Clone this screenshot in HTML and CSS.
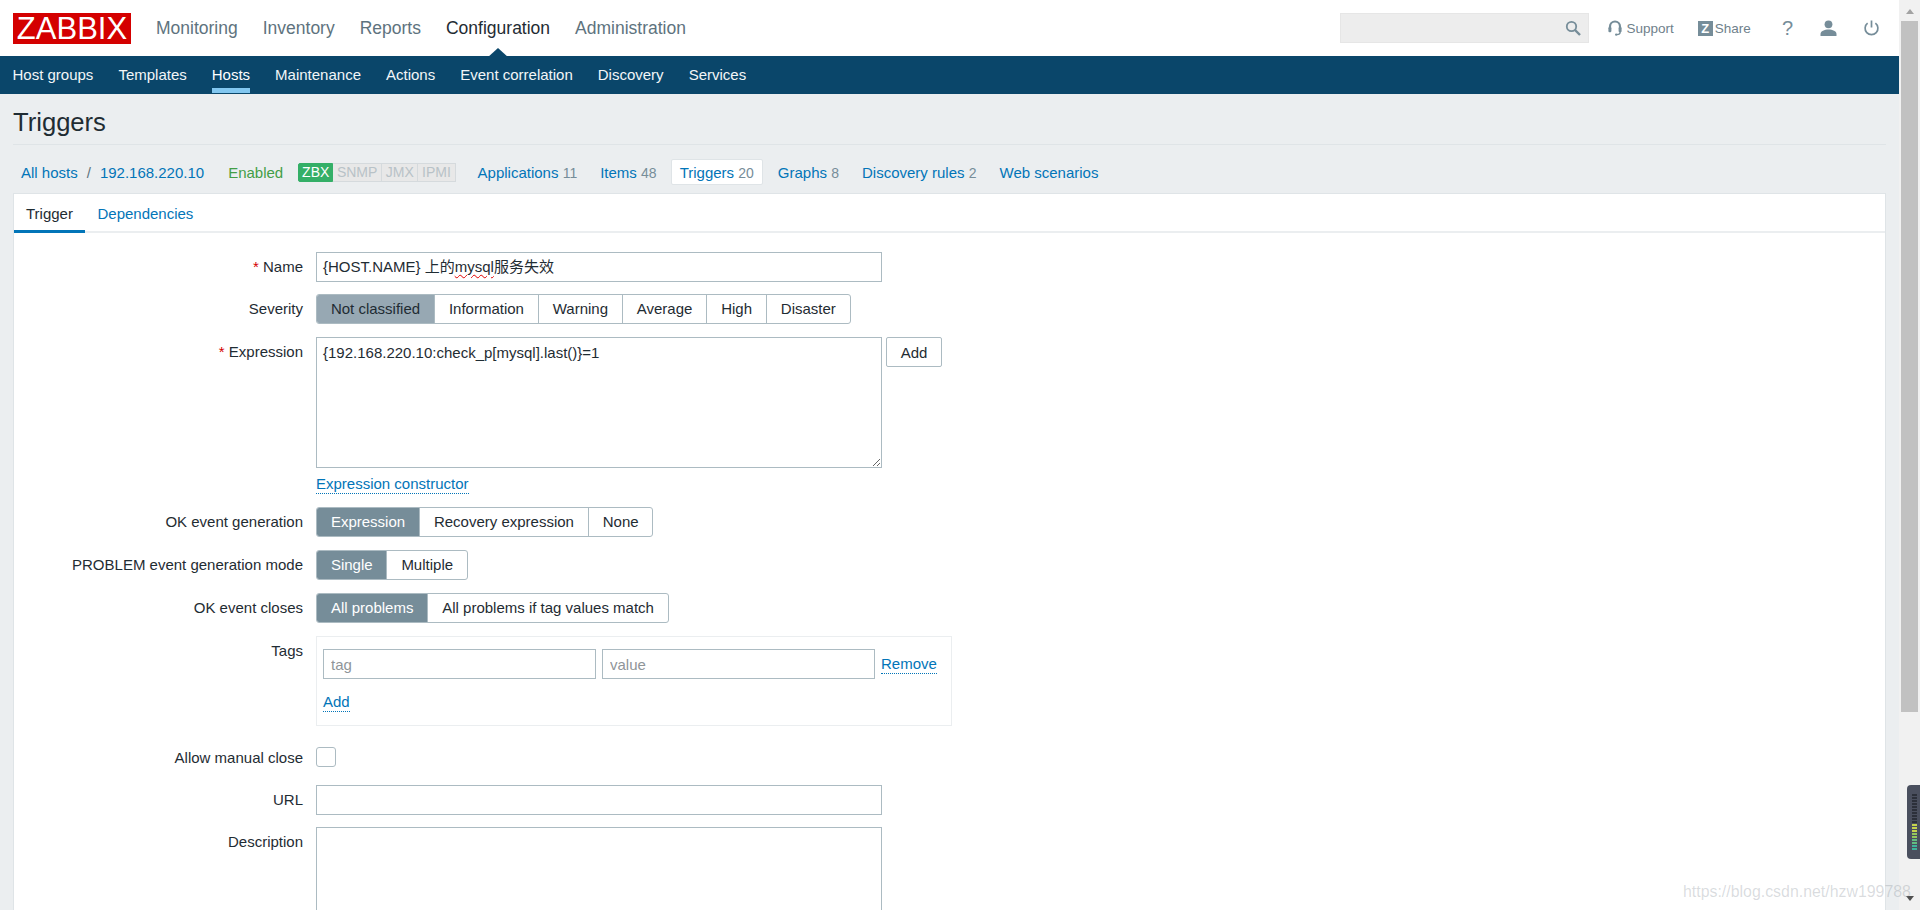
FILE: index.html
```html
<!DOCTYPE html>
<html lang="en">

<head>
    <meta charset="UTF-8">
    <meta name="viewport" content="width=device-width, initial-scale=1.0">
    <title>Configuration of triggers</title>
    <link rel="stylesheet" href="styles.css">
</head>

<body>
    <div class="page">
        <header class="top">
            <a class="logo">ZABBIX</a>
            <ul class="main-nav">
                <li>Monitoring</li>
                <li>Inventory</li>
                <li>Reports</li>
                <li class="active">Configuration</li>
                <li>Administration</li>
            </ul>
            <div class="search">
                <svg width="16" height="16" viewBox="0 0 16 16" fill="none" stroke="#768d99">
                    <circle cx="6.5" cy="6.5" r="4.7" stroke-width="1.8" />
                    <path d="M10 10l5 5" stroke-width="2.4" />
                </svg>
            </div>
            <a class="tool support">
                <svg width="14" height="16" viewBox="0 0 14 16" fill="none">
                    <path d="M2 8V6.5a5 5 0 0 1 10 0V8" stroke="#768d99" stroke-width="2.2" />
                    <rect x="0.4" y="7" width="3" height="5.2" rx="1.2" fill="#768d99" />
                    <rect x="10.6" y="7" width="3" height="5.2" rx="1.2" fill="#768d99" />
                    <path d="M12.2 12c0 1.8-1.6 2.6-3.4 2.6" stroke="#768d99" stroke-width="1.3" />
                    <circle cx="8.2" cy="14.6" r="1.2" fill="#768d99" />
                </svg>
                Support
            </a>
            <a class="tool share"><span class="z-box">Z</span>Share</a>
            <a class="tool help">?</a>
            <a class="tool user">
                <svg width="17" height="16" viewBox="0 0 17 16" fill="#768d99">
                    <circle cx="8.5" cy="4.3" r="3.9" />
                    <path d="M0.5 16v-2c0-3 4-4.6 8-4.6s8 1.6 8 4.6v2z" />
                </svg>
            </a>
            <a class="tool power">
                <svg width="15" height="16" viewBox="0 0 15 16" fill="none" stroke="#768d99" stroke-width="1.7">
                    <path d="M3.6 3.2a6.4 6.4 0 1 0 7.8 0" />
                    <path d="M7.5 0.5v7" />
                </svg>
            </a>
        </header>

        <ul class="sub-nav">
            <li>Host groups</li>
            <li>Templates</li>
            <li class="active">Hosts</li>
            <li>Maintenance</li>
            <li>Actions</li>
            <li>Event correlation</li>
            <li>Discovery</li>
            <li>Services</li>
        </ul>

        <main class="content">
            <h1 class="title">Triggers</h1>

            <ul class="host-nav">
                <li class="crumbs"><a>All hosts</a><span class="slash">/</span><a>192.168.220.10</a></li>
                <li class="enabled">Enabled</li>
                <li class="badges">
                    <span class="on">ZBX</span><span>SNMP</span><span>JMX</span><span>IPMI</span>
                </li>
                <li class="link apps"><a>Applications</a> <em>11</em></li>
                <li class="link"><a>Items</a> <em>48</em></li>
                <li class="link current"><a>Triggers</a> <em>20</em></li>
                <li class="link"><a>Graphs</a> <em>8</em></li>
                <li class="link"><a>Discovery rules</a> <em>2</em></li>
                <li class="link"><a>Web scenarios</a></li>
            </ul>

            <section class="panel">
                <ul class="tabs">
                    <li class="active">Trigger</li>
                    <li><a>Dependencies</a></li>
                </ul>

                <form class="form">
                    <div class="row">
                        <label class="lbl"><i>*</i> Name</label>
                        <div class="text-box long">{HOST.NAME} 上的<span class="typo">mysql</span>服务失效</div>
                    </div>
                    <div class="row gap12">
                        <label class="lbl">Severity</label>
                        <ul class="seg">
                            <li class="soft">Not classified</li>
                            <li>Information</li>
                            <li>Warning</li>
                            <li>Average</li>
                            <li>High</li>
                            <li>Disaster</li>
                        </ul>
                    </div>
                    <div class="row">
                        <label class="lbl"><i>*</i> Expression</label>
                        <div class="expr">
                            <textarea class="area long">{192.168.220.10:check_p[mysql].last()}=1</textarea>
                            <button type="button" class="btn">Add</button>
                        </div>
                    </div>
                    <div class="row constructor">
                        <span class="lbl"></span>
                        <a class="dotted">Expression constructor</a>
                    </div>
                    <div class="row">
                        <label class="lbl">OK event generation</label>
                        <ul class="seg">
                            <li class="sel">Expression</li>
                            <li>Recovery expression</li>
                            <li>None</li>
                        </ul>
                    </div>
                    <div class="row">
                        <label class="lbl">PROBLEM event generation mode</label>
                        <ul class="seg">
                            <li class="sel">Single</li>
                            <li>Multiple</li>
                        </ul>
                    </div>
                    <div class="row">
                        <label class="lbl">OK event closes</label>
                        <ul class="seg">
                            <li class="sel">All problems</li>
                            <li>All problems if tag values match</li>
                        </ul>
                    </div>
                    <div class="row">
                        <label class="lbl">Tags</label>
                        <div class="tags">
                            <div class="tag-row">
                                <input class="field tag-field" placeholder="tag">
                                <input class="field tag-field" placeholder="value">
                                <a class="dotted">Remove</a>
                            </div>
                            <a class="dotted tag-add">Add</a>
                        </div>
                    </div>
                    <div class="row manual">
                        <label class="lbl">Allow manual close</label>
                        <span class="check"></span>
                    </div>
                    <div class="row url">
                        <label class="lbl">URL</label>
                        <input class="field long">
                    </div>
                    <div class="row gap12">
                        <label class="lbl">Description</label>
                        <textarea class="area long desc"></textarea>
                    </div>
                </form>
            </section>
        </main>
    </div>

    <aside class="scrollbar">
        <span class="arrow up"></span>
        <span class="thumb"></span>
        <span class="arrow down"></span>
    </aside>

    <div class="meter">
        <span class="off"></span><span class="off"></span><span class="off"></span><span class="off"></span>
        <span class="off"></span><span class="off"></span><span class="off"></span><span class="off"></span>
        <span class="off"></span><span class="off"></span>
        <span class="c1"></span><span class="c1"></span><span class="c1"></span><span class="c2"></span><span class="c2"></span>
        <span class="c3"></span><span class="c3"></span><span class="c4"></span><span class="c4"></span>
    </div>
    <div class="watermark">https://blog.csdn.net/hzw199788</div>
</body>

</html>
```

FILE: styles.css
```css
* {
    padding: 0;
    margin: 0;
    box-sizing: border-box;
    list-style: none;
}

html,
body {
    height: 910px;
    overflow: hidden;
}

body {
    display: flex;
    background-color: #ebeef0;
    color: #1f2c33;
    font: 15px "Liberation Sans", "Noto Sans CJK SC", sans-serif;
}

a {
    color: #0275b8;
}

.page {
    flex: 1;
    min-width: 0;
    height: 910px;
    overflow: hidden;
}

/* top bar */
.top {
    display: flex;
    align-items: center;
    height: 56px;
    padding-left: 13px;
    background-color: #fff;
}

.logo {
    width: 118px;
    height: 31px;
    background-color: #d40000;
    color: #fff;
    font-size: 31px;
    line-height: 32px;
    text-align: center;
}

.main-nav {
    display: flex;
    gap: 25px;
    margin-left: 25px;
    font-size: 17.5px;
    color: #5e737e;
}

.main-nav .active {
    position: relative;
    color: #1f2c33;
}

.main-nav .active::after {
    content: '';
    position: absolute;
    left: 50%;
    bottom: -19px;
    margin-left: -11px;
    border-left: 11px solid transparent;
    border-right: 11px solid transparent;
    border-bottom: 10px solid #0a466a;
}

.search {
    display: flex;
    align-items: center;
    justify-content: flex-end;
    width: 249px;
    height: 30px;
    margin-left: auto;
    padding-right: 7px;
    background-color: #ededed;
    border: 1px solid #e6e6e6;
}

.tool {
    display: flex;
    align-items: center;
    color: #6f818b;
    font-size: 13.5px;
}

.support {
    gap: 5px;
    margin-left: 19px;
}

.share {
    margin-left: 24px;
}

.z-box {
    width: 15px;
    height: 15px;
    margin-right: 2px;
    background-color: #768d99;
    color: #fff;
    font-size: 13px;
    font-weight: bold;
    line-height: 15px;
    text-align: center;
}

.help {
    margin-left: 31px;
    font-size: 20px;
    color: #768d99;
}

.user {
    margin-left: 27px;
}

.power {
    margin-left: 27px;
    margin-right: 20px;
}

/* second level menu */
.sub-nav {
    display: flex;
    gap: 25px;
    height: 38px;
    padding-left: 12.5px;
    background-color: #0a466a;
    color: #f2f6f8;
}

.sub-nav li {
    height: 37px;
    line-height: 37px;
}

.sub-nav .active {
    color: #fff;
    border-bottom: 5px solid #82c7f0;
}

/* page body */
.content {
    padding: 0 13px;
}

.title {
    height: 51px;
    padding-top: 9px;
    font-size: 25.6px;
    font-weight: normal;
    line-height: 38px;
    border-bottom: 1px solid #dfe4e7;
}

.host-nav {
    display: flex;
    align-items: center;
    height: 26px;
    margin-top: 14px;
    padding-left: 8px;
}

.crumbs .slash {
    margin: 0 9px;
    color: #5e737e;
}

.enabled {
    margin-left: 24px;
    color: #429e47;
}

.badges {
    display: flex;
    height: 19px;
    margin-left: 15px;
    border-radius: 2px;
    font-size: 14px;
    line-height: 17px;
    color: #b8c2c7;
}

.badges span {
    padding: 0 3.7px;
    background-color: #e8e8e8;
    border: 1px solid #d5dadd;
    border-left: 0;
}

.badges .on {
    width: 35px;
    padding: 0;
    background-color: #34af67;
    border: 1px solid #34af67;
    border-radius: 2px 0 0 2px;
    color: #fff;
    text-align: center;
}

.link {
    margin-left: 23px;
    white-space: nowrap;
}

.link em {
    font-style: normal;
    font-size: 14px;
    color: #768d99;
}

.link.apps {
    margin-left: 22px;
}

.link.current {
    height: 26px;
    margin-left: 14px;
    margin-right: -8px;
    padding: 0 8px;
    line-height: 25px;
    background-color: #fff;
    border: 1px solid #dfe4e7;
    border-radius: 2px;
}

.panel {
    height: 800px;
    margin-top: 8px;
    background-color: #fff;
    border: 1px solid #dfe4e7;
}

.tabs {
    display: flex;
    height: 39px;
    border-bottom: 2px solid #ebeef0;
}

.tabs li {
    height: 39px;
    padding: 0 12.5px 0 12px;
    line-height: 39px;
}

.tabs .active {
    border-bottom: 3px solid #0275b8;
}

/* form rows */
.form {
    padding-top: 19px;
}

.row {
    display: flex;
    margin-top: 13px;
}

.row:first-child {
    margin-top: 0;
}

.row.gap12 {
    margin-top: 12px;
}

.lbl {
    flex: none;
    width: 289px;
    margin-right: 13px;
    padding-top: 6px;
    text-align: right;
    white-space: nowrap;
}

.lbl i {
    font-style: normal;
    color: #d40000;
}

.long {
    width: 566px;
}

.text-box,
.field,
.area {
    height: 30px;
    padding: 0 7px;
    background-color: #fff;
    border: 1px solid #acbbc2;
    color: #1f2c33;
    font: 15px "Liberation Sans", "Noto Sans CJK SC", sans-serif;
    line-height: 28px;
}

.text-box,
.area {
    padding-left: 6px;
}

.field::placeholder {
    color: #8f9599;
}

.typo {
    text-decoration: underline wavy #e00000 1px;
    text-underline-offset: 2px;
}

.area {
    display: block;
    height: 131px;
    padding-top: 1px;
}

.desc {
    height: 200px;
}

.expr {
    display: flex;
    align-items: flex-start;
    gap: 4px;
}

.btn {
    width: 56px;
    height: 30px;
    background-color: #fff;
    border: 1px solid #acbbc2;
    border-radius: 2px;
    color: #1f2c33;
    font: 15px "Liberation Sans", sans-serif;
}

.seg {
    display: flex;
    height: 30px;
    border: 1px solid #acbbc2;
    border-radius: 3px;
    line-height: 28px;
    white-space: nowrap;
}

.seg li {
    padding: 0 13.9px;
    border-left: 1px solid #acbbc2;
}

.seg li:first-child {
    border-left: 0;
    border-radius: 2px 0 0 2px;
}

.seg .sel {
    background-color: #768d99;
    color: #fff;
}

.seg .soft {
    background-color: #97a8b3;
}

.constructor {
    height: 19px;
    margin-top: 7px;
}

.constructor .lbl {
    padding: 0;
}

.dotted {
    height: 19px;
    line-height: 17px;
    border-bottom: 1px dotted #0275b8;
}

.tags {
    width: 636px;
    height: 90px;
    padding: 12px 6px 0;
    border: 1px solid #ebeef0;
}

.tag-row {
    display: flex;
    align-items: center;
    gap: 6px;
}

.tag-field {
    width: 273px;
}

.tag-add {
    display: inline-block;
    margin-top: 14px;
}

.manual {
    height: 20px;
    margin-top: 21px;
}

.manual .lbl {
    padding-top: 2px;
}

.check {
    width: 20px;
    height: 20px;
    border: 1px solid #acbbc2;
    border-radius: 3px;
}

.row.url {
    margin-top: 18px;
}

/* browser scrollbar, it is part of the screenshot */
.scrollbar {
    flex: none;
    display: flex;
    flex-direction: column;
    align-items: center;
    width: 21px;
    height: 910px;
    background-color: #f1f1f1;
}

.arrow {
    flex: none;
    width: 0;
    height: 0;
    border-left: 4px solid transparent;
    border-right: 4px solid transparent;
}

.arrow.up {
    margin: 9px 0 7px;
    border-bottom: 5px solid #a3a3a3;
}

.arrow.down {
    margin-top: auto;
    margin-bottom: 9px;
    border-top: 5px solid #505050;
}

.thumb {
    width: 17px;
    height: 691px;
    background-color: #c1c1c1;
}

/* floating things over the page */
.meter {
    position: absolute;
    top: 785px;
    right: 0;
    display: flex;
    flex-direction: column;
    gap: 1px;
    width: 13px;
    height: 74px;
    padding: 9px 0 0 5px;
    background-color: #4a4f5e;
    border-radius: 4px 0 0 4px;
}

.meter span {
    width: 5px;
    height: 2px;
}

.meter .off {
    background-color: #2c303a;
}

.meter .c1 {
    background-color: #c5d34d;
}

.meter .c2 {
    background-color: #94c85c;
}

.meter .c3 {
    background-color: #62bd80;
}

.meter .c4 {
    background-color: #3fb39a;
}

.watermark {
    position: absolute;
    left: 1683px;
    top: 883px;
    color: rgba(120, 130, 140, 0.28);
    font-size: 15.9px;
    white-space: nowrap;
}
```
